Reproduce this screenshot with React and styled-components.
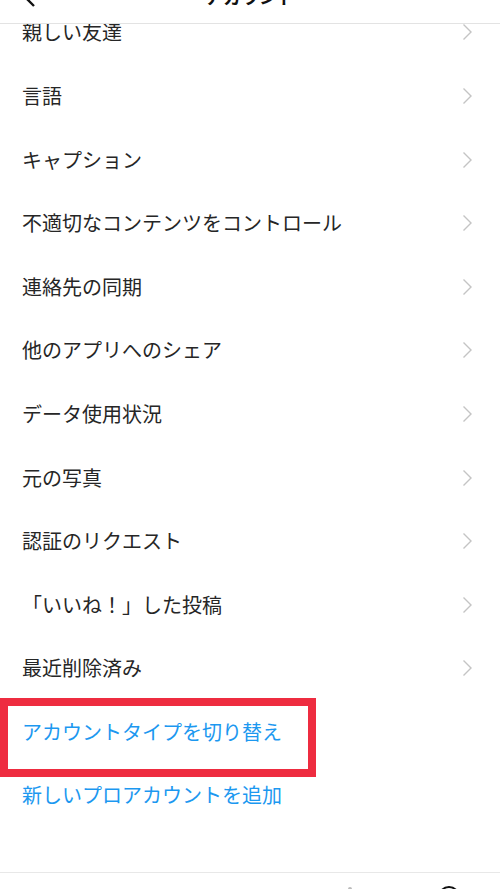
import styled, { createGlobalStyle } from "styled-components"

const GlobalStyle = createGlobalStyle`
  html, body {
    margin: 0;
    padding: 0;
    background: #fff;
  }
  body {
    font-family: "Noto Sans CJK JP", "Noto Sans", sans-serif;
    -webkit-font-smoothing: antialiased;
  }
`

const items = [
  { label: "親しい友達" },
  { label: "言語" },
  { label: "キャプション" },
  { label: "不適切なコンテンツをコントロール" },
  { label: "連絡先の同期" },
  { label: "他のアプリへのシェア" },
  { label: "データ使用状況" },
  { label: "元の写真" },
  { label: "認証のリクエスト" },
  { label: "「いいね！」した投稿" },
  { label: "最近削除済み" },
  { label: "アカウントタイプを切り替え", link: true, marked: true },
  { label: "新しいプロアカウントを追加", link: true },
]

const Chevron = () => (
  <svg width="11" height="18" viewBox="0 0 11 18" fill="none">
    <polyline points="1.5,1.5 9,9 1.5,16.5" stroke="#c4c4c4" strokeWidth="1.4" strokeLinejoin="miter" />
  </svg>
)

const BackArrow = () => (
  <svg width="14" height="24" viewBox="0 0 14 24" fill="none">
    <polyline points="12,2 2,12 12,22" stroke="#111" strokeWidth="2.4" />
  </svg>
)

const App = () => {
  return (
    <>
      <GlobalStyle />
      <Screen>
        <Header>
          <HeaderRow>
            <BackButton><BackArrow /></BackButton>
            <Title>アカウント</Title>
          </HeaderRow>
        </Header>
        <Content>
          <List>
            {items.map((item) => (
              <Row key={item.label} $marked={item.marked}>
                <Label $link={item.link}>{item.label}</Label>
                {!item.link && <Chevron />}
              </Row>
            ))}
          </List>
        </Content>
        <TabBar>
          <TabDot />
          <ProfileRing />
        </TabBar>
      </Screen>
    </>
  )
}

export default App

const Screen = styled.div`
  height: 889px;
  display: flex;
  flex-direction: column;
  overflow: hidden;
`

const Header = styled.header`
  position: relative;
  z-index: 1;
  height: 23px;
  flex-shrink: 0;
  background: #fff;
  border-bottom: 1px solid #e3e3e3;
  overflow: hidden;
`

const HeaderRow = styled.div`
  height: 40px;
  margin-top: -24px;
  display: flex;
  align-items: center;
  justify-content: center;
  position: relative;
`

const BackButton = styled.div`
  position: absolute;
  left: 22px;
  top: 8px;
  display: flex;
`

const Title = styled.h1`
  margin: 0;
  font-size: 18px;
  font-weight: 700;
  color: #111;
  line-height: 1;
`

const Content = styled.main`
  flex: 1;
  overflow: hidden;
  position: relative;
`

const List = styled.ul`
  list-style: none;
  margin: -23.3px 0 0;
  padding: 0;
`

const Row = styled.li`
  position: relative;
  height: 63.58px;
  display: flex;
  align-items: center;
  justify-content: space-between;
  padding: 0 27px 0 22px;

  ${({ $marked }) => $marked && `
    &::after {
      content: "";
      position: absolute;
      left: 0;
      top: -2.5px;
      width: 316px;
      height: 79px;
      border: 8.5px solid #ee2c40;
      box-sizing: border-box;
      pointer-events: none;
    }
  `}
`

const Label = styled.span`
  font-size: 20px;
  line-height: 1;
  color: ${({ $link }) => ($link ? "#1c98f0" : "#262626")};
`

const TabBar = styled.footer`
  height: 16px;
  flex-shrink: 0;
  border-top: 1px solid #e8e8e8;
  position: relative;
  overflow: hidden;
`

const TabDot = styled.span`
  position: absolute;
  left: 348px;
  top: 14px;
  width: 4px;
  height: 4px;
  border-radius: 50%;
  background: #bbb;
`

const ProfileRing = styled.span`
  position: absolute;
  left: 438px;
  top: 13px;
  width: 22px;
  height: 22px;
  border-radius: 50%;
  border: 2px solid #111;
  box-sizing: border-box;
`
